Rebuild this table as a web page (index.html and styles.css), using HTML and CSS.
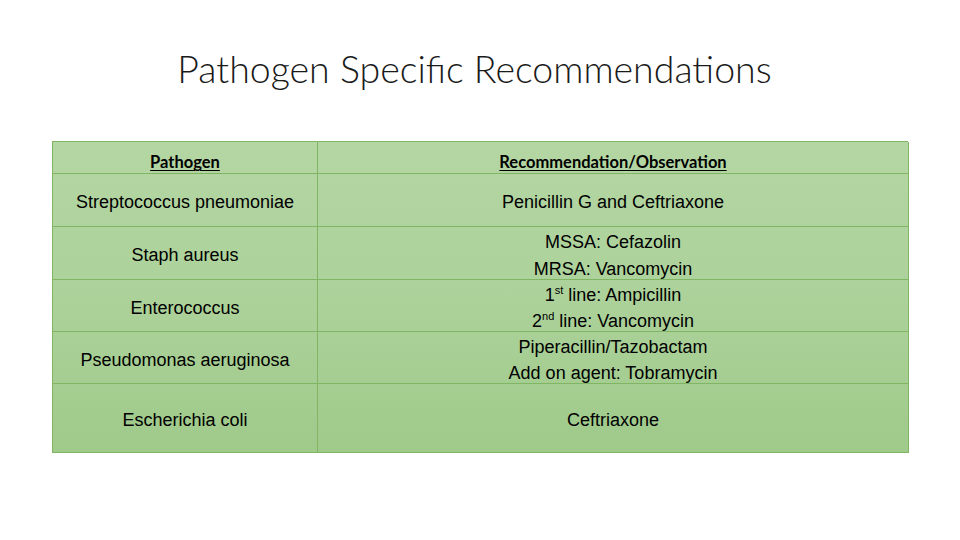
FILE: index.html
```html
<!DOCTYPE html>
<html>
<head>
<meta charset="utf-8">
<link rel="stylesheet" href="styles.css">
</head>
<body>
<div class="slide">
  <h1 class="title">Pathogen Specific Recommendations</h1>
  <div class="grid">
    <div class="cell head"><span class="ul">Pathogen</span></div>
    <div class="cell head"><span class="ul">Recommendation/Observation</span></div>
    <div class="cell">Streptococcus pneumoniae</div>
    <div class="cell">Penicillin G and Ceftriaxone</div>
    <div class="cell">Staph aureus</div>
    <div class="cell"><div>MSSA: Cefazolin<br>MRSA: Vancomycin</div></div>
    <div class="cell">Enterococcus</div>
    <div class="cell"><div>1<sup>st</sup> line: Ampicillin<br>2<sup>nd</sup> line: Vancomycin</div></div>
    <div class="cell">Pseudomonas aeruginosa</div>
    <div class="cell"><div>Piperacillin/Tazobactam<br>Add on agent: Tobramycin</div></div>
    <div class="cell">Escherichia coli</div>
    <div class="cell">Ceftriaxone</div>
  </div>
</div>
</body>
</html>
```
FILE: styles.css
```css
html, body { margin: 0; padding: 0; background: #fff; }
.slide { width: 960px; height: 540px; overflow: hidden; }
.title {
  margin: 0;
  padding-top: 46px;
  height: 141px;
  box-sizing: border-box;
  font-family: "Lato", "Open Sans", sans-serif;
  font-weight: 300;
  font-size: 37.5px;
  line-height: 46px;
  color: #1a1a1a;
  text-align: center;
  padding-right: 11px;
}
.grid {
  margin-left: 52px;
  width: 856px;
  box-sizing: border-box;
  display: grid;
  grid-template-columns: 265px 591px;
  grid-template-rows: 32px 53px 53px 52px 52px 69px;
  border-top: 1px solid #80b563;
  border-left: 1px solid #80b563;
  background: linear-gradient(to bottom, #b4d6a3 0%, #abd199 55%, #9fca8a 100%);
  font-family: "Liberation Sans", Arial, sans-serif;
  font-size: 18px;
  color: #000;
}
.cell {
  box-sizing: border-box;
  border-right: 1px solid #80b563;
  border-bottom: 1px solid #80b563;
  display: flex;
  align-items: center;
  justify-content: center;
  text-align: center;
  line-height: 26.5px;
  padding-top: 5px;
  overflow: visible;
}
.cell.head {
  font-family: "Lato", "Open Sans", sans-serif;
  font-weight: 700;
  font-size: 16.5px;
  padding-top: 10px;
}
.ul { text-decoration: underline; text-decoration-thickness: 1px; text-underline-offset: 2px; }
sup { font-size: 11px; line-height: 0; vertical-align: 7px; }
```
